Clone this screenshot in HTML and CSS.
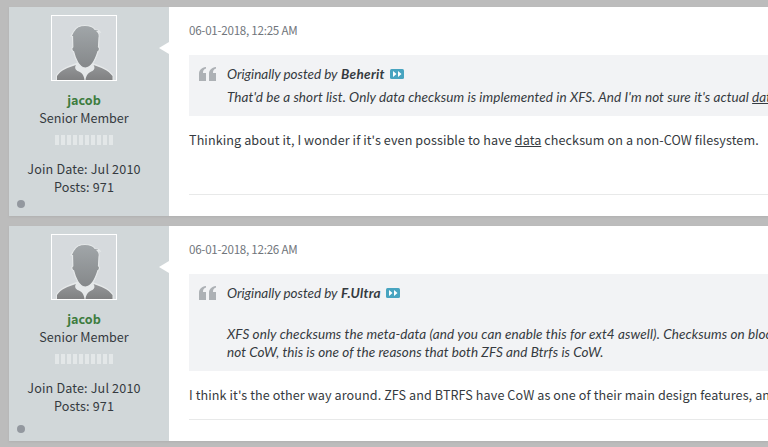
FILE: index.html
```html
<!DOCTYPE html>
<html lang="en">
<head>
<meta charset="utf-8">
<title>Forum thread</title>
<link rel="stylesheet" href="styles.css">
</head>
<body>
<svg class="defs" aria-hidden="true">
  <defs>
    <linearGradient id="skin" x1="0" y1="0" x2="0" y2="1"><stop offset="0" stop-color="#a1a6a9"/><stop offset="1" stop-color="#85888a"/></linearGradient>
    <linearGradient id="coat" x1="0" y1="0" x2="0" y2="1"><stop offset="0" stop-color="#949698"/><stop offset="1" stop-color="#808182"/></linearGradient>
    <symbol id="person" viewBox="0 0 64 64">
      <path d="M4 64V59.500C8 53 16 50 23 47.500L26 46H39L42 47.500C49 50 57 53 61.500 59.500V64Z" fill="#e6e9ea"/>
      <path d="M5 64V60C9 54 16 51.500 24 49C22 52 24 54 25.500 55C29.500 56 32 59 32.500 64ZM33.500 64C34 59 37 56 40.500 55C42 54 43.500 52 41.500 49C49 51.500 56 54 60.500 60V64Z" fill="url(#coat)"/>
      <path d="M20.500 20.500L19 20C20.500 18 20.500 17 22 15C24 11 29 9.500 33 9.500C39 9.500 42 12 43 13.500C45 13.500 47 14 48 16C47 15.500 46 15.500 45.500 15.500C48 18 47.500 20 47 22L46.500 31C48.500 32 47 35.500 46 35.500C44 42 40 52 33.500 52C27 52 23 42 21.500 35.500C20 35.500 19 32 20.800 31Z" fill="url(#skin)" stroke="#e5e8e9" stroke-width="1.200"/>
    </symbol>
    <symbol id="quote" viewBox="0 0 17 14">
      <path d="M7 0V1.500C4.500 2 4 4 4 6H7V14H0V7C0 3 2.500.500 7 0ZM17 0V1.500C14.500 2 14 4 14 6H17V14H10V7C10 3 12.500.500 17 0Z" fill="#adb1b5"/>
    </symbol>
    <symbol id="jump" viewBox="0 0 14 10">
      <rect width="14" height="10" rx="1.500" fill="#48a4c0"/>
      <path d="M3 2L6.500 5L3 8ZM8 2L11.500 5L8 8Z" fill="#fff"/>
    </symbol>
  </defs>
</svg>
<main class="thread">
  <article class="post post-first">
    <aside class="author">
      <svg class="avatar"><use href="#person"/></svg>
      <a class="name">jacob</a>
      <div class="rank">Senior Member</div>
      <div class="rep"><i></i><i></i><i></i><i></i><i></i><i></i><i></i><i></i><i></i><i></i></div>
      <div class="joined">Join Date: Jul 2010</div>
      <div class="count">Posts: 971</div>
      <span class="status"></span>
    </aside>
    <section class="content">
      <time class="date">06-01-2018, 12:25 AM</time>
      <blockquote class="quote">
        <svg class="mark"><use href="#quote"/></svg>
        <div class="quoted">
          <div class="source"><span>Originally posted by</span> <b>Beherit</b><svg class="jump"><use href="#jump"/></svg></div>
          <p class="line single">That'd be a short list. Only data checksum is implemented in XFS. And I'm not sure it's actual <u>data</u></p>
        </div>
      </blockquote>
      <p class="reply">Thinking about it, I wonder if it's even possible to have <u>data</u> checksum on a non-COW filesystem.</p>
      <hr class="rule">
    </section>
  </article>
  <article class="post post-second">
    <aside class="author">
      <svg class="avatar"><use href="#person"/></svg>
      <a class="name">jacob</a>
      <div class="rank">Senior Member</div>
      <div class="rep"><i></i><i></i><i></i><i></i><i></i><i></i><i></i><i></i><i></i><i></i></div>
      <div class="joined">Join Date: Jul 2010</div>
      <div class="count">Posts: 971</div>
      <span class="status"></span>
    </aside>
    <section class="content">
      <time class="date">06-01-2018, 12:26 AM</time>
      <blockquote class="quote">
        <svg class="mark"><use href="#quote"/></svg>
        <div class="quoted">
          <div class="source"><span>Originally posted by</span> <b>F.Ultra</b><svg class="jump"><use href="#jump"/></svg></div>
          <p class="line spaced">XFS only checksums the meta-data (and you can enable this for ext4 aswell). Checksums on blocks</p>
          <p class="line">not CoW, this is one of the reasons that both ZFS and Btrfs is CoW.</p>
        </div>
      </blockquote>
      <p class="reply">I think it's the other way around. ZFS and BTRFS have CoW as one of their main design features, and</p>
      <hr class="rule">
    </section>
  </article>
</main>
</body>
</html>
```
FILE: styles.css
```css
* { box-sizing: border-box; }
html { overflow: hidden; }
body {
  margin: 0;
  background: #bcbcbc;
  color: #353a40;
  font: 12.6px/18px "Noto Sans CJK SC", sans-serif;
  white-space: nowrap;
  overflow: hidden;
}
p { margin: 0; }
u { text-decoration-thickness: 1px; text-underline-offset: 1px; }
.defs { position: absolute; width: 0; height: 0; }
.thread { padding: 7px 0 0 9px; height: 447px; overflow: hidden; }
.post { display: flex; margin-bottom: 10px; background: #fff; box-shadow: 0 1px 2px #b1b1b1; }
.post-first { height: 209px; }
.post-second { height: 215px; }
.author {
  position: relative;
  flex: 0 0 160px;
  padding: 8px 10px 0 0;
  display: flex;
  flex-direction: column;
  align-items: center;
  background: #d1d7d9;
}
.author::after {
  content: "";
  position: absolute;
  right: 0;
  top: 35px;
  border: solid transparent;
  border-width: 6px 10px 6px 0;
  border-right-color: #fff;
}
.avatar { width: 66px; height: 66px; border: 1px solid #fff; background: #d6dadd; margin-bottom: 10px; }
.name { color: #3d7c3f; font-weight: bold; }
.joined, .count { letter-spacing: .15px; }
.rep { display: flex; gap: 2px; margin: 8px 0 15px; }
.rep i { width: 4px; height: 10px; background: #e3e7e8; }
.status { position: absolute; left: 8px; bottom: 8px; width: 8px; height: 8px; border-radius: 50%; background: #93989f; }
.content { flex: 1; min-width: 0; padding: 14px 0 0 20px; overflow: hidden; }
.date { display: block; color: #70757b; font-size: 11.6px; letter-spacing: -.25px; }
.quote { display: flex; margin: 16px 0 15px; padding: 10px 0 10px 10px; background: #f2f3f5; overflow: hidden; }
.post-first .quote { height: 61px; }
.post-second .quote { height: 97px; }
.mark { flex: none; width: 17px; height: 14px; margin: 2px 11px 0 0; }
.quoted { font-family: Lato, sans-serif; font-style: italic; font-size: 13.5px; letter-spacing: .07px; }
.source { display: flex; align-items: center; gap: 4px; }
.source span { letter-spacing: -.03px; margin-right: -.5px; }
.source b { letter-spacing: .3px; }
.jump { width: 14px; height: 10px; margin-left: 1px; }
.single { margin-top: 5px; letter-spacing: .08px; }
.spaced { margin-top: 23px; letter-spacing: .1px; }
.reply { letter-spacing: .09px; }
.rule { margin: 0; border: 0; border-top: 1px solid #e8e9e9; }
.post-first .rule { margin-top: 45px; }
.post-second .rule { margin-top: 15px; }
```
